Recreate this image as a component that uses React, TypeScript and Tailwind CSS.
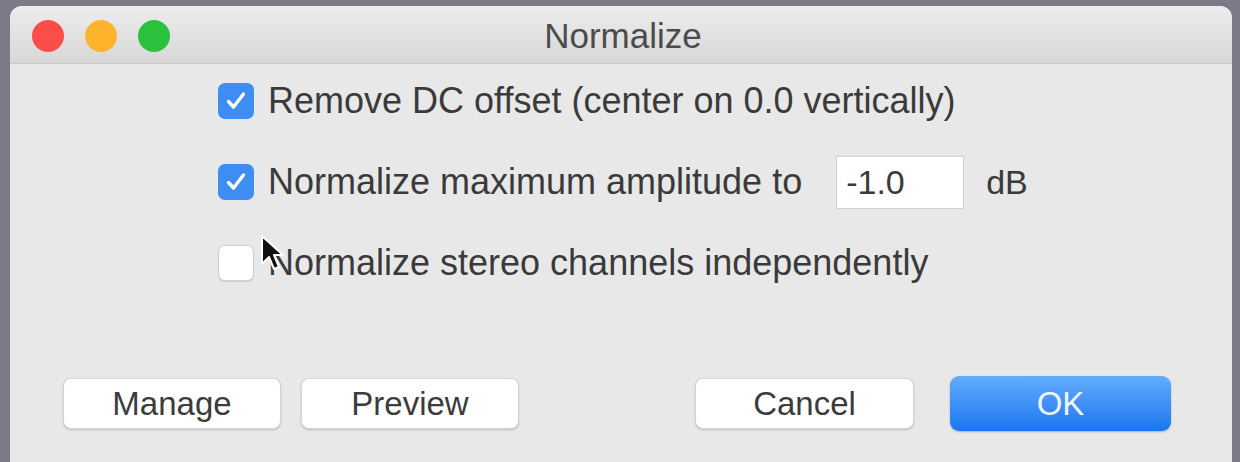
import React from 'react'

const font = { fontFamily: '"Liberation Sans", Arial, sans-serif' }

function Check({ on }: { on: boolean }) {
  if (!on)
    return <div className="h-[36px] w-[36px] shrink-0 rounded-[7px] border border-[#cfcfcf] bg-white shadow-[0_1px_1px_rgba(0,0,0,0.12)]" />
  return (
    <div className="flex h-[36px] w-[36px] shrink-0 items-center justify-center rounded-[7px] bg-[#3d8df3]">
      <svg width="24" height="24" viewBox="0 0 24 24" fill="none">
        <path d="M4.5 12.5 L9.5 18 L19.5 5" stroke="white" strokeWidth="3.4" strokeLinecap="round" strokeLinejoin="round" />
      </svg>
    </div>
  )
}

function Btn({ label, primary, w }: { label: string; primary?: boolean; w: string }) {
  if (primary)
    return (
      <button className={`${w} flex h-[55px] items-center justify-center rounded-[9px] bg-gradient-to-b from-[#62acfc] to-[#1875f0] text-[33px] text-[#eef5ff] shadow-[0_1px_2px_rgba(0,0,0,0.25)]`}>
        {label}
      </button>
    )
  return (
    <button className={`${w} flex h-[51px] items-center justify-center rounded-[8px] border border-[#d6d6d6] bg-white text-[33px] text-[#3c3c3c] shadow-[0_1px_2px_rgba(0,0,0,0.2)]`}>
      {label}
    </button>
  )
}

export default function App() {
  return (
    <div style={font} className="h-[462px] w-[1240px] overflow-hidden bg-[#7b7a87] pl-[10px] pt-[6px]">
      <div className="relative h-[470px] w-[1222px] overflow-hidden rounded-t-[12px] bg-[#e8e8e8]">
        {/* title bar */}
        <div className="grid h-[58px] grid-cols-[1fr_auto_1fr] items-center border-b border-[#c9c9c9] bg-gradient-to-b from-[#ededed] to-[#d7d7d7]">
          <div className="flex items-center gap-[21px] pl-[22px] pt-[2px]">
            <span className="h-[32px] w-[32px] rounded-full bg-[#fc4d48]" />
            <span className="h-[32px] w-[32px] rounded-full bg-[#fdb32c]" />
            <span className="h-[32px] w-[32px] rounded-full bg-[#2cc13c]" />
          </div>
          <div className="pl-[4px] pt-[3px] text-[35px] text-[#4b4b4b]">Normalize</div>
          <div />
        </div>

        {/* options */}
        <div className="flex flex-col gap-[45px] pl-[208px] pt-[19px] text-[36px] leading-[36px] text-[#3a3a3a]">
          <div className="flex h-[36px] items-center gap-[14px]">
            <Check on />
            <span>Remove DC offset (center on 0.0 vertically)</span>
          </div>
          <div className="flex h-[36px] items-center gap-[14px]">
            <Check on />
            <span>Normalize maximum amplitude to</span>
            <div className="ml-[20px] flex h-[53px] w-[128px] shrink-0 items-center border border-[#d3d3d3] bg-white pl-[9px] text-[34px]">
              -1.0
            </div>
            <span className="ml-[8px] text-[34px]">dB</span>
          </div>
          <div className="flex h-[36px] items-center gap-[14px]">
            <Check on={false} />
            <span>Normalize stereo channels independently</span>
          </div>
        </div>

        {/* buttons */}
        <div className="mt-[95px] flex items-center pl-[53px] pr-[61px]">
          <Btn label="Manage" w="w-[218px]" />
          <div className="ml-[20px]">
            <Btn label="Preview" w="w-[218px]" />
          </div>
          <div className="ml-auto">
            <Btn label="Cancel" w="w-[219px]" />
          </div>
          <div className="ml-[36px]">
            <Btn label="OK" primary w="w-[221px]" />
          </div>
        </div>

        {/* mouse pointer */}
        <svg className="absolute left-[250px] top-[228px]" width="26" height="38" viewBox="0 0 26 38">
          <path d="M2 2 L2 30 L9 23 L14 35 L19 33 L14 21 L23 21 Z" fill="#111" stroke="white" strokeWidth="2" strokeLinejoin="round" />
        </svg>
      </div>
    </div>
  )
}
